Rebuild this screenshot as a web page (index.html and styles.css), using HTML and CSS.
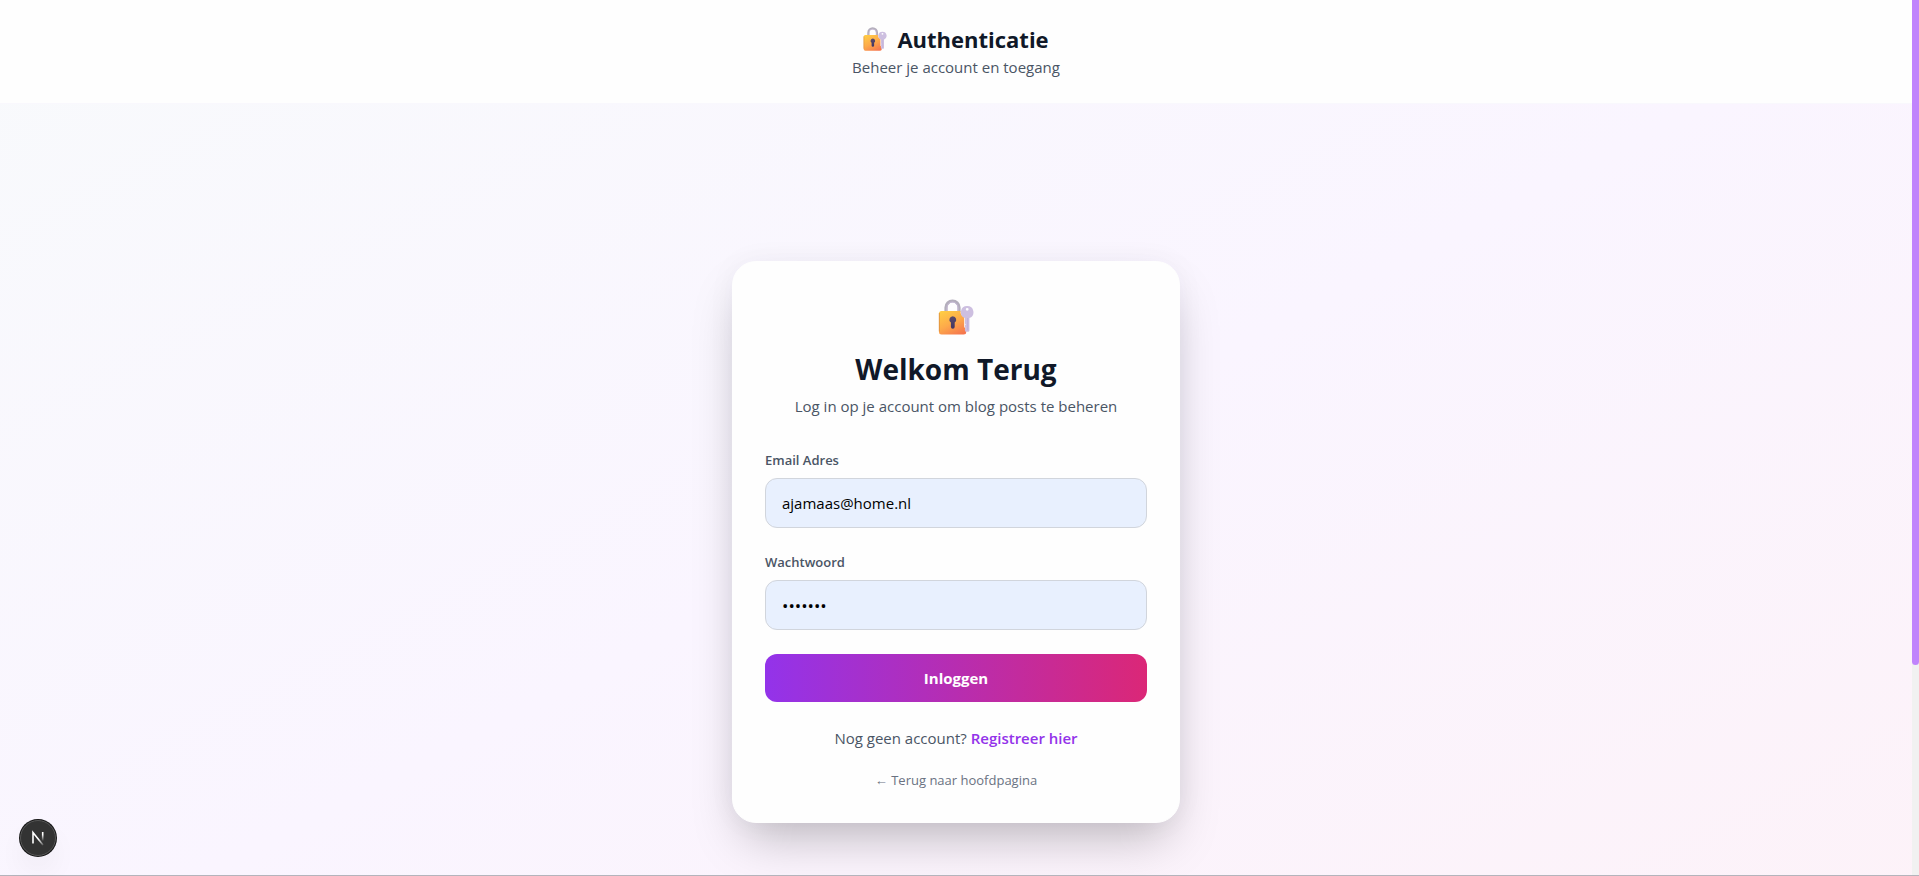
FILE: index.html
```html
<!DOCTYPE html>
<html lang="nl">
<head>
<meta charset="utf-8">
<meta name="viewport" content="width=device-width, initial-scale=1">
<title>Authenticatie</title>
<link rel="stylesheet" href="styles.css">
</head>
<body>
<svg class="defs" aria-hidden="true">
  <defs>
    <linearGradient id="gold" x1="0.2" y1="0" x2="0.8" y2="1">
      <stop offset="0" stop-color="#ffcb45"/>
      <stop offset="0.5" stop-color="#fdaa4a"/>
      <stop offset="1" stop-color="#f5764e"/>
    </linearGradient>
    <linearGradient id="hole" x1="0" y1="0" x2="0" y2="1">
      <stop offset="0" stop-color="#5b4a6b"/>
      <stop offset="1" stop-color="#3f3463"/>
    </linearGradient>
    <symbol id="lock" viewBox="0 0 36 36">
      <path d="M8 13V8.500a6.500 6.500 0 0 1 13 0V13" fill="none" stroke="#b3aebb" stroke-width="3.200"/>
      <path d="M9 13V8.500a5.500 5.500 0 0 1 11 0V13" fill="none" stroke="#c9bbd8" stroke-width="1"/>
      <path d="M3.500 12H22.500c0 3.500 1.200 4.800 3.700 6V28l2 2.500V33a2.500 2.500 0 0 1-2.500 2.500H3.500A2.500 2.500 0 0 1 1 33V14.500A2.500 2.500 0 0 1 3.500 12Z" fill="url(#gold)"/>
      <path d="M1.300 14v18.500" stroke="#d98a3c" stroke-width="0.800"/>
      <path d="M14.800 17.200a3.500 3.500 0 0 1 1.900 6.400v4.200a1.900 1.900 0 0 1-3.800 0v-4.200a3.500 3.500 0 0 1 1.900-6.400Z" fill="url(#hole)"/>
      <path fill-rule="evenodd" d="M29.200 7a6.200 6.200 0 0 1 2.200 12V31.500a1.300 1.300 0 0 1-1.300 1.300h-2a1.300 1.300 0 0 1-1.200-1.300v-1.400l.8-.8-.8-1v-1.800l.8-.9-.8-1V19a6.200 6.200 0 0 1 2.300-12Zm0 1.900a1.400 1.400 0 1 0 0 2.800 1.400 1.400 0 0 0 0-2.800Z" fill="#cdbfe0"/>
      <path d="M29.700 19v12.300" stroke="#b9a9d2" stroke-width="0.700"/>
    </symbol>
  </defs>
</svg>
<div class="shell">
  <div class="page">
    <header class="header">
      <h1 class="header-title"><svg class="header-icon" aria-hidden="true"><use href="#lock"/></svg>Authenticatie</h1>
      <p class="text">Beheer je account en toegang</p>
    </header>
    <main class="main">
      <section class="card">
        <div class="intro">
          <svg class="card-icon" aria-hidden="true"><use href="#lock"/></svg>
          <h2 class="card-title">Welkom Terug</h2>
          <p class="text">Log in op je account om blog posts te beheren</p>
        </div>
        <form class="form">
          <div class="field">
            <label class="label" for="email">Email Adres</label>
            <input class="input" id="email" type="email" value="ajamaas@home.nl">
          </div>
          <div class="field">
            <label class="label" for="password">Wachtwoord</label>
            <input class="input input-password" id="password" type="password" value="geheim1">
          </div>
          <button class="submit" type="submit">Inloggen</button>
        </form>
        <div class="links">
          <p class="text">Nog geen account? <a class="register" href="#registreer">Registreer hier</a></p>
          <a class="back" href="#home">← Terug naar hoofdpagina</a>
        </div>
      </section>
    </main>
  </div>
  <div class="scrollbar"><div class="thumb"></div></div>
  <button class="dev" type="button" aria-label="Next.js">
    <svg width="16" height="16" viewBox="0 0 16 16" fill="none" aria-hidden="true">
      <defs>
        <linearGradient id="stem" x1="0" y1="2" x2="0" y2="11" gradientUnits="userSpaceOnUse">
          <stop offset="0.300" stop-color="#fff"/><stop offset="1" stop-color="#fff" stop-opacity="0"/>
        </linearGradient>
        <linearGradient id="slash" x1="9" y1="9" x2="13" y2="15" gradientUnits="userSpaceOnUse">
          <stop offset="0" stop-color="#fff"/><stop offset="1" stop-color="#fff" stop-opacity="0.200"/>
        </linearGradient>
      </defs>
      <path d="M3 13.500V2.500L13 15" stroke="url(#slash)" stroke-width="1.600"/>
      <path d="M12.700 2v9" stroke="url(#stem)" stroke-width="1.600"/>
    </svg>
  </button>
</div>
</body>
</html>
```
FILE: styles.css
```css
*, *::before, *::after { box-sizing: border-box; }

body {
  margin: 0;
  font-family: "Open Sans", "Noto Sans", sans-serif;
  font-size: 15px;
  line-height: 24px;
  color: #101828;
}

h1, h2, p { margin: 0; }
a { text-decoration: none; }
.defs { position: absolute; width: 0; height: 0; }

.shell {
  display: flex;
  height: 100vh;
  overflow: hidden;
  border-bottom: 1px solid #b4b4bc;
}

.page {
  flex: 1;
  height: max-content;
  background: linear-gradient(to bottom right, #f8fafc, #faf5ff 50%, #fdf2f8);
}

.header {
  padding: 23px 0 24px;
  border-bottom: 1px solid #f9f8fd;
  text-align: center;
  background: #fefefe;
}

.header-title {
  display: flex;
  align-items: center;
  justify-content: center;
  gap: 10px;
  font-size: 22px;
  line-height: 32px;
  font-weight: 700;
}

.header-icon { width: 24px; height: 24px; }
.text { color: #4a5565; }

.main {
  display: flex;
  align-items: center;
  justify-content: center;
  min-height: 100vh;
  padding: 16px;
}

.card {
  width: 100%;
  max-width: 448px;
  padding: 32px;
  border: 1px solid #fefefe;
  border-radius: 24px;
  background: #fefefe;
  box-shadow: 0 25px 50px -12px rgba(0, 0, 0, 0.25), 0 0 30px rgba(40, 20, 80, 0.04);
}

.intro { text-align: center; margin-bottom: 32px; }
.card-icon { display: block; width: 36px; height: 36px; margin: 5px auto 16px; }
.card-title {
  margin-bottom: 7px;
  font-size: 28px;
  line-height: 36px;
  font-weight: 700;
}

.form, .field { display: flex; flex-direction: column; }
.form { gap: 24px; }
.field { gap: 8px; }

.label {
  font-size: 13px;
  line-height: 20px;
  font-weight: 600;
  color: #4a5565;
}

.input {
  width: 100%;
  height: 50px;
  padding: 12px 16px;
  border: 1px solid #d1d5dc;
  border-radius: 12px;
  background: #e8f0fe;
  color: #000;
  font: inherit;
}

.input-password { font-size: 17px; }

.submit {
  height: 48px;
  border: 0;
  border-radius: 12px;
  background: linear-gradient(to right, #9333ea, #db2777);
  color: #fff;
  font: inherit;
  font-weight: 700;
}

.links {
  display: flex;
  flex-direction: column;
  align-items: center;
  gap: 20px;
  margin-top: 24px;
}

.register { color: #9333ea; font-weight: 600; }
.back { font-size: 13px; line-height: 20px; color: #6a7282; }

.scrollbar { width: 7px; background: #f1f1f1; }
.thumb { height: 76%; border-radius: 0 0 4px 4px; background: #c084fc; }

.dev {
  position: fixed;
  left: 20px;
  bottom: 20px;
  display: grid;
  place-items: center;
  width: 36px;
  height: 36px;
  padding: 0;
  border: 1px solid #555;
  border-radius: 50%;
  background: #333;
  box-shadow: 0 0 0 1px #171717, 0 16px 32px -8px rgba(0, 0, 0, 0.14);
}
```
